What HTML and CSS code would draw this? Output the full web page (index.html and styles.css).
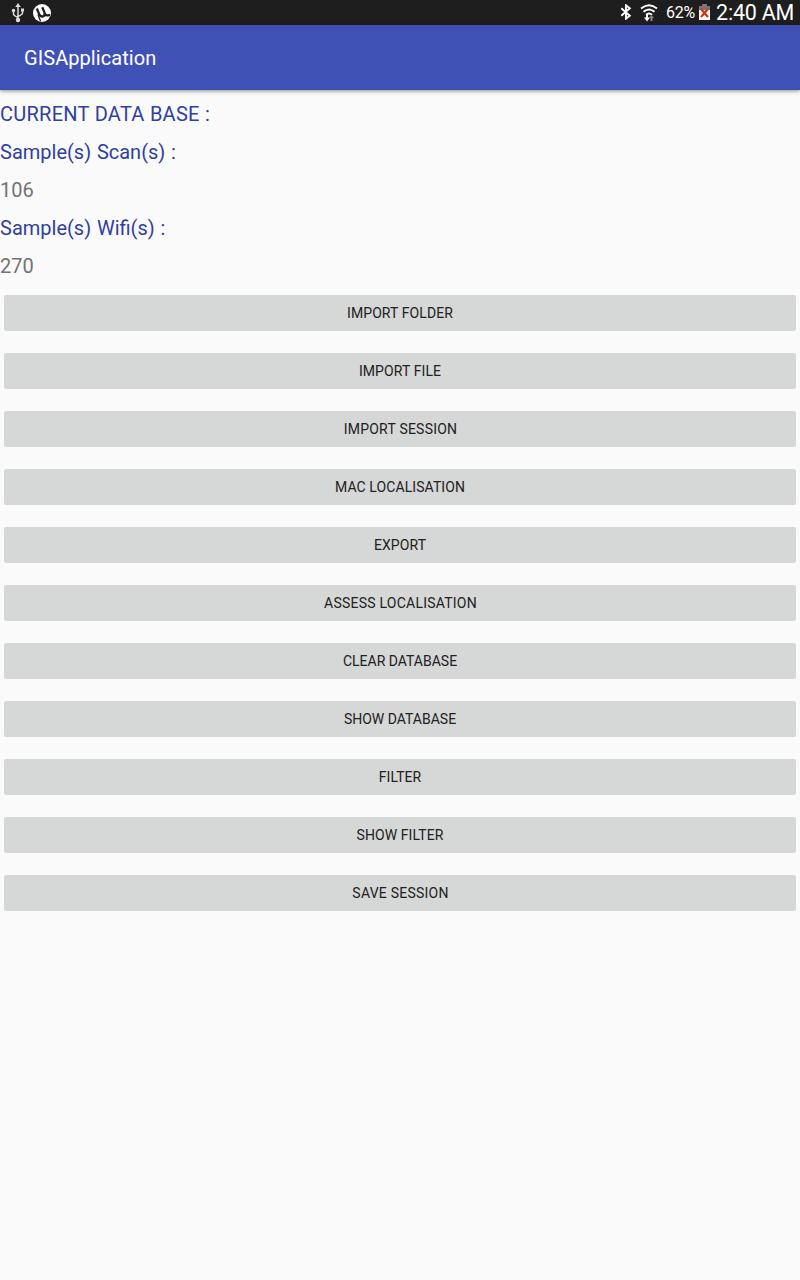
FILE: index.html
```
<!DOCTYPE html>
<html lang="en">
<head>
<meta charset="utf-8">
<title>GISApplication</title>
<link rel="stylesheet" href="styles.css">
</head>
<body>
<header class="status">
  <div class="group left">
    <svg class="usb" width="14" height="20" viewBox="0 0 14 20"><path d="M7 3v14M2.500 8v3q0 1.500 4.500 3.500M11.500 7v3q0 1.500-4.500 3.500" fill="none" stroke="#ddd" stroke-width="1.500"/><path d="M7 0l2.800 4H4.200z" fill="#ddd"/><circle cx="7" cy="17" r="2.200" fill="#ddd"/><circle cx="2.500" cy="7.500" r="1.700" fill="#ddd"/><path d="M10 5.500h3v3h-3z" fill="#ddd"/></svg>
    <svg class="torrent" width="18" height="18" viewBox="0 0 18 18"><circle cx="9" cy="9" r="9" fill="#fff"/><path d="M3.800 4.500l2.400 5.700q1.500 3 4 2.100 2.300-1.200 1.200-4L9.300 3.200M11.300 8.500q1.200 3.200 3.400 2.900l2.300-.4" fill="none" stroke="#1e1e1e" stroke-width="2.300"/><path d="M5 10.500l2.600 6.700" fill="none" stroke="#1e1e1e" stroke-width="1.300"/></svg>
  </div>
  <div class="group right">
    <svg class="bt" width="12" height="16" viewBox="0 0 12 16"><path d="M1.300 4.300l8.500 7.400L6 14.700V1.300l3.800 3-8.500 7.400" fill="none" stroke="#fff" stroke-width="1.900"/></svg>
    <svg class="wifi" width="18" height="18" viewBox="0 0 18 18"><path d="M1 4.500q8-6.600 16 0M3.500 7.700q5.500-4.600 11 0M6 10.700q3-2.600 6 0" fill="none" stroke="#fff" stroke-width="1.900"/><path d="M6 10.500h2v3h2l-3 4-3-4h2z" fill="#fff"/><path d="M10.500 17v-3H9l2.500-3 2.500 3h-1.500v3z" fill="#888"/></svg>
    <span class="pct">62%</span>
    <svg class="battery" width="11" height="16" viewBox="0 0 11 16"><path d="M3 0h5v2h3v5H0V2h3z" fill="#777"/><path d="M0 6h11v10H0z" fill="#fff"/><path d="M2 5l7 8M9 5l-7 8" stroke="#d9300c" stroke-width="2.200"/></svg>
    <span class="time">2:40 AM</span>
  </div>
</header>
<div class="appbar"><h1 class="title">GISApplication</h1></div>
<main class="content">
  <p class="line label caps">CURRENT DATA BASE :</p>
  <p class="line label">Sample(s) Scan(s) :</p>
  <p class="line">106</p>
  <p class="line label">Sample(s) Wifi(s) :</p>
  <p class="line">270</p>
  <div class="actions">
    <button class="btn">IMPORT FOLDER</button>
    <button class="btn">IMPORT FILE</button>
    <button class="btn wide">IMPORT SESSION</button>
    <button class="btn">MAC LOCALISATION</button>
    <button class="btn">EXPORT</button>
    <button class="btn wide">ASSESS LOCALISATION</button>
    <button class="btn even">CLEAR DATABASE</button>
    <button class="btn even">SHOW DATABASE</button>
    <button class="btn">FILTER</button>
    <button class="btn">SHOW FILTER</button>
    <button class="btn wide">SAVE SESSION</button>
  </div>
</main>
</body>
</html>
```
FILE: styles.css
```
* { box-sizing: border-box; }
body { margin: 0; min-height: 1280px; background: #fafafa; font-family: Roboto, sans-serif; }
.status { display: flex; justify-content: space-between; height: 25px; background: #1e1e1e; color: #fff; }
.group { display: flex; align-items: center; height: 25px; }
.left { padding-left: 11px; gap: 8px; }
.right { padding-right: 6px; }
.bt { margin-bottom: 1px; }
.wifi { margin: 0 8px 0 8px; }
.pct { width: 29px; font-size: 16px; letter-spacing: -.2px; }
.battery { margin: 0 6px 2px 4px; }
.time { width: 78px; font-size: 21.5px; line-height: 25px; letter-spacing: -.2px; white-space: nowrap; height: 25px; }
.appbar { display: flex; align-items: center; height: 65px; padding-left: 24px; background: #3f51b5; box-shadow: 0 1px 4px rgba(0,0,0,.45); }
.title { margin: 0; font-size: 20px; font-weight: 400; letter-spacing: .07px; color: #fff; }
.content { padding-top: 5px; }
.line { margin: 0; height: 38px; line-height: 38px; font-size: 20px; color: #737373; }
.label { word-spacing: .8px; color: #303f9f; }
.caps { word-spacing: 0; letter-spacing: .27px; }
.actions { display: flex; flex-direction: column; gap: 22px; padding: 10px 4px 0; }
.btn { height: 36px; padding: 0; border: 0; border-radius: 2px; background: #d6d7d7; color: #212121; font: 400 14px Roboto, sans-serif; letter-spacing: .09px; }
.wide { padding-left: 1px; letter-spacing: .23px; }
.even { letter-spacing: 0; }
```
